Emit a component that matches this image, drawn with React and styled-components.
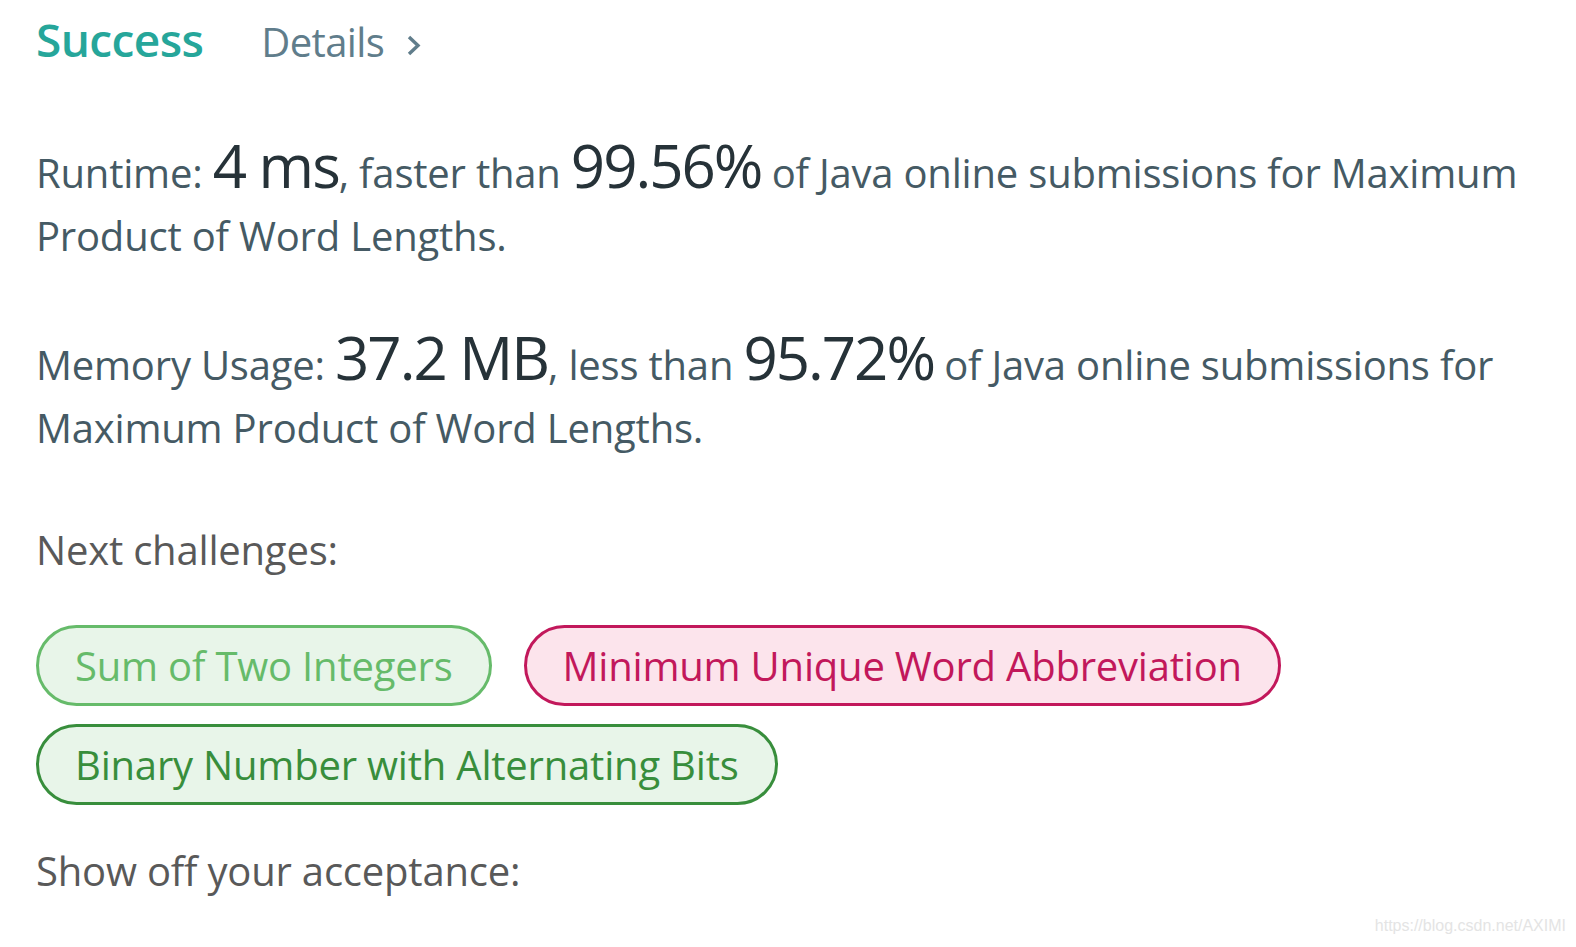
import React from 'react';
import styled, { createGlobalStyle } from 'styled-components';

const Global = createGlobalStyle`
	html, body {
		margin: 0;
		padding: 0;
		background: #fff;
	}
	body {
		font-family: "Open Sans", "Noto Sans", sans-serif;
	}
`;

const Page = styled.div`
	position: relative;
	width: 1576px;
	height: 947px;
	box-sizing: border-box;
	padding: 8px 0 0 36px;
	overflow: hidden;
`;

const Header = styled.div`
	display: flex;
	align-items: baseline;
	gap: 58px;
	height: 64px;
`;

const Status = styled.span`
	font-size: 46px;
	font-weight: 600;
	color: #26a69a;
	letter-spacing: -0.6px;
`;

const DetailsLink = styled.a`
	display: flex;
	align-items: baseline;
	gap: 22px;
	font-size: 40px;
	color: #607d8b;
	text-decoration: none;
	letter-spacing: -0.6px;
`;

const Chevron = styled.svg`
	width: 16px;
	height: 24px;
`;

const Stat = styled.p`
	margin: ${props => props.top}px 0 0;
	width: 1525px;
	font-size: 40px;
	line-height: 63px;
	color: #455a64;
	letter-spacing: -0.2px;
`;

const Big = styled.span`
	font-size: 60px;
	line-height: 0;
	color: #263238;
	letter-spacing: -2px;
`;

const Label = styled.div`
	margin-top: ${props => props.top}px;
	font-size: 40px;
	line-height: 63px;
	color: #595959;
	letter-spacing: -0.2px;
`;

const Pills = styled.div`
	display: flex;
	flex-wrap: wrap;
	gap: 18px 32px;
	margin-top: 44px;
	width: 1300px;
`;

const Pill = styled.a`
	display: inline-flex;
	align-items: center;
	height: 81px;
	box-sizing: border-box;
	padding: 0 36px;
	border: 3px solid ${props => props.color};
	border-radius: 41px;
	background: ${props => props.bg};
	color: ${props => props.color};
	font-size: 40px;
	letter-spacing: -0.2px;
	text-decoration: none;
`;

const Watermark = styled.div`
	position: absolute;
	right: 10px;
	bottom: 12px;
	font-family: "Liberation Sans", Arial, sans-serif;
	font-size: 16px;
	color: #e4e4e4;
`;

const challenges = [
	{ title: 'Sum of Two Integers', color: '#66bb6a', bg: '#e8f5e9' },
	{ title: 'Minimum Unique Word Abbreviation', color: '#c2185b', bg: '#fce4ec' },
	{ title: 'Binary Number with Alternating Bits', color: '#388e3c', bg: '#e8f5e9' },
];

export default function App() {
	return (
		<Page>
			<Global />
			<Header>
				<Status>Success</Status>
				<DetailsLink href="#">
					Details
					<Chevron viewBox="0 0 16 24">
						<path d="M3 4 L12 12.5 L3 21" fill="none" stroke="#607d8b" strokeWidth="3.4" />
					</Chevron>
				</DetailsLink>
			</Header>
			<Stat top={69}>
				Runtime: <Big>4 ms</Big>, faster than <Big>99.56%</Big> of Java online submissions for Maximum Product of Word Lengths.
			</Stat>
			<Stat top={66}>
				Memory Usage: <Big>37.2 MB</Big>, less than <Big>95.72%</Big> of Java online submissions for Maximum Product of Word Lengths.
			</Stat>
			<Label top={59}>Next challenges:</Label>
			<Pills>
				{challenges.map(c => (
					<Pill key={c.title} href="#" color={c.color} bg={c.bg}>
						{c.title}
					</Pill>
				))}
			</Pills>
			<Label top={34}>Show off your acceptance:</Label>
			<Watermark>https://blog.csdn.net/AXIMI</Watermark>
		</Page>
	);
}
